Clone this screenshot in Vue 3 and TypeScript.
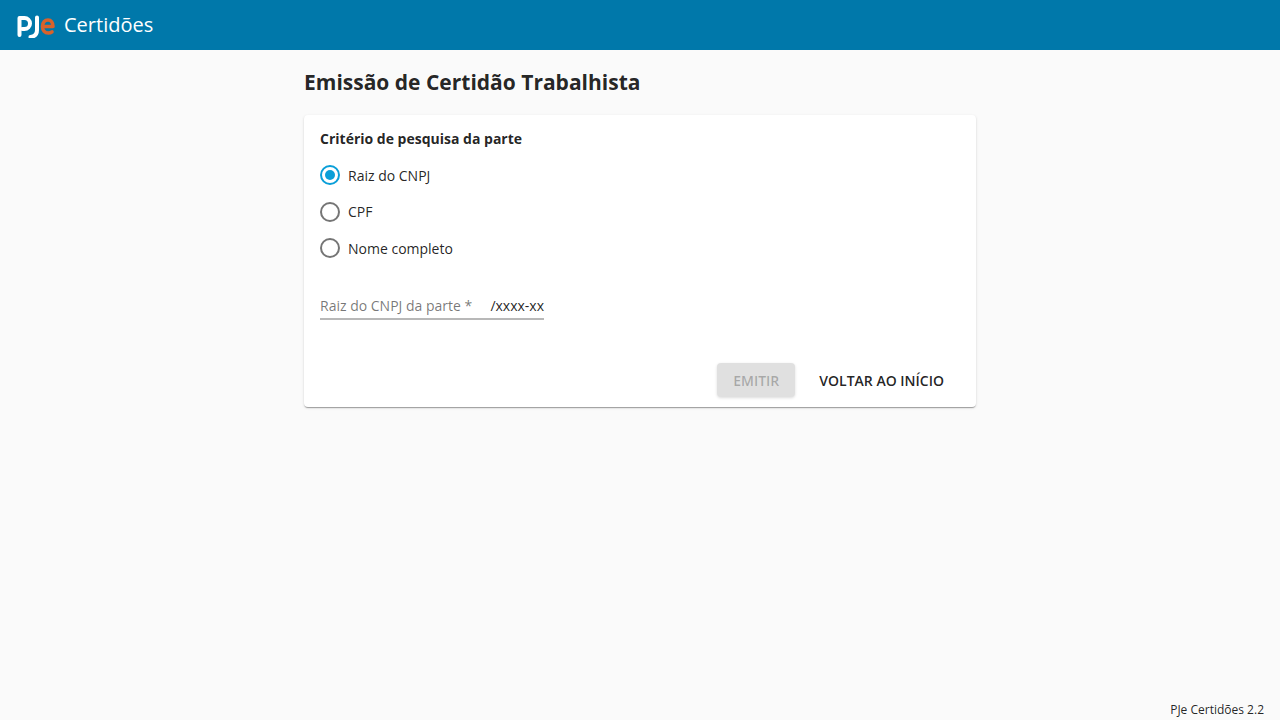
<script setup lang="ts">
import { ref } from 'vue'
const options = ['Raiz do CNPJ', 'CPF', 'Nome completo']
const selected = ref(0)
</script>

<template>
  <div class="page">
    <header class="toolbar">
      <svg class="logo" width="40" height="26" viewBox="0 0 40 26">
        <path fill="none" stroke="#fff" stroke-width="4" stroke-linecap="round" stroke-linejoin="round" d="M3.500 23V6H8.500a5.500 5.500 0 0 1 0 11H6.500" />
        <path fill="none" stroke="#fff" stroke-width="4" stroke-linecap="round" d="M21 5.500V18c0 4-2.500 6.500-6.500 7" />
        <path fill="none" stroke="#d9622b" stroke-width="3.600" stroke-linecap="round" stroke-linejoin="round" d="M27 14.500h10c0-4-2-6.500-5-6.500s-5.500 2.500-5.500 6.500 2.500 6.500 5.800 6.500c1.500 0 2.700-.4 3.700-1.200" />
      </svg>
      <span class="app-title">Certidões</span>
    </header>

    <main class="content">
      <h1 class="heading">Emissão de Certidão Trabalhista</h1>
      <section class="card">
        <div class="label">Critério de pesquisa da parte</div>
        <div class="radios">
          <label v-for="(o, i) in options" :key="o" class="radio" @click="selected = i">
            <span class="ring" :class="{ on: selected === i }"><span v-if="selected === i" class="dot"></span></span>
            <span class="radio-text">{{ o }}</span>
          </label>
        </div>
        <div class="field">
          <span class="placeholder">Raiz do CNPJ da parte *</span>
          <span class="suffix">/xxxx-xx</span>
        </div>
        <div class="actions">
          <button class="btn raised" disabled>EMITIR</button>
          <button class="btn flat">VOLTAR AO INÍCIO</button>
        </div>
      </section>
    </main>
    <footer class="version">PJe Certidões 2.2</footer>
  </div>
</template>

<style>
html, body { margin: 0; background: #fafafa; }
</style>

<style scoped>
.page {
  height: 720px;
  display: flex;
  flex-direction: column;
  background: #fafafa;
  font-family: "Open Sans", "Noto Sans", sans-serif;
  color: rgba(0, 0, 0, 0.87);
  overflow: hidden;
}
.toolbar {
  height: 50px;
  flex: none;
  background: #0078aa;
  display: flex;
  align-items: center;
  padding-left: 16px;
  gap: 8px;
  color: #fff;
}
.logo { display: block; }
.app-title { font-size: 20px; font-weight: 400; padding-bottom: 2px; }
.content {
  flex: 1;
  width: 672px;
  margin: 0 auto;
}
.heading {
  margin: 16px 0 17px;
  font-size: 21px;
  line-height: 32px;
  font-weight: 700;
}
.card {
  background: #fff;
  border-radius: 4px;
  padding: 16px 16px 10px;
  height: 292px;
  box-sizing: border-box;
  display: flex;
  flex-direction: column;
  box-shadow: 0 2px 1px -1px rgba(0,0,0,.2), 0 1px 1px 0 rgba(0,0,0,.14), 0 1px 3px 0 rgba(0,0,0,.12);
}
.label { font-size: 14px; font-weight: 700; line-height: 16px; }
.radios { display: flex; flex-direction: column; margin-top: 10px; }
.radio { display: flex; align-items: center; height: 36.5px; gap: 8px; font-size: 14px; }
.ring {
  width: 20px;
  height: 20px;
  border: 2px solid rgba(0,0,0,.54);
  border-radius: 50%;
  display: flex;
  align-items: center;
  justify-content: center;
  box-sizing: border-box;
}
.ring.on { border-color: #0a9fd8; }
.dot { width: 10px; height: 10px; border-radius: 50%; background: #0a9fd8; }
.field {
  width: 224px;
  margin-top: 20px;
  height: 33px;
  padding-top: 7px;
  display: flex;
  align-items: center;
  justify-content: space-between;
  border-bottom: 2px solid rgba(0,0,0,.28);
  box-sizing: border-box;
  font-size: 14px;
}
.placeholder { color: rgba(0,0,0,.54); }
.suffix { color: rgba(0,0,0,.87); }
.actions { margin-top: auto; display: flex; justify-content: flex-end; gap: 8px; }
.btn {
  font: 600 14px "Open Sans", sans-serif;
  height: 34px;
  border: 0;
  border-radius: 4px;
  padding: 0 16px;
  background: transparent;
  color: rgba(0,0,0,.87);
}
.raised {
  background: rgba(0,0,0,.12);
  color: rgba(0,0,0,.26);
  box-shadow: 0 1px 3px rgba(0,0,0,.14);
}
.version {
  position: absolute;
  right: 16px;
  bottom: 2px;
  font-size: 12px;
  line-height: 16px;
}
</style>
